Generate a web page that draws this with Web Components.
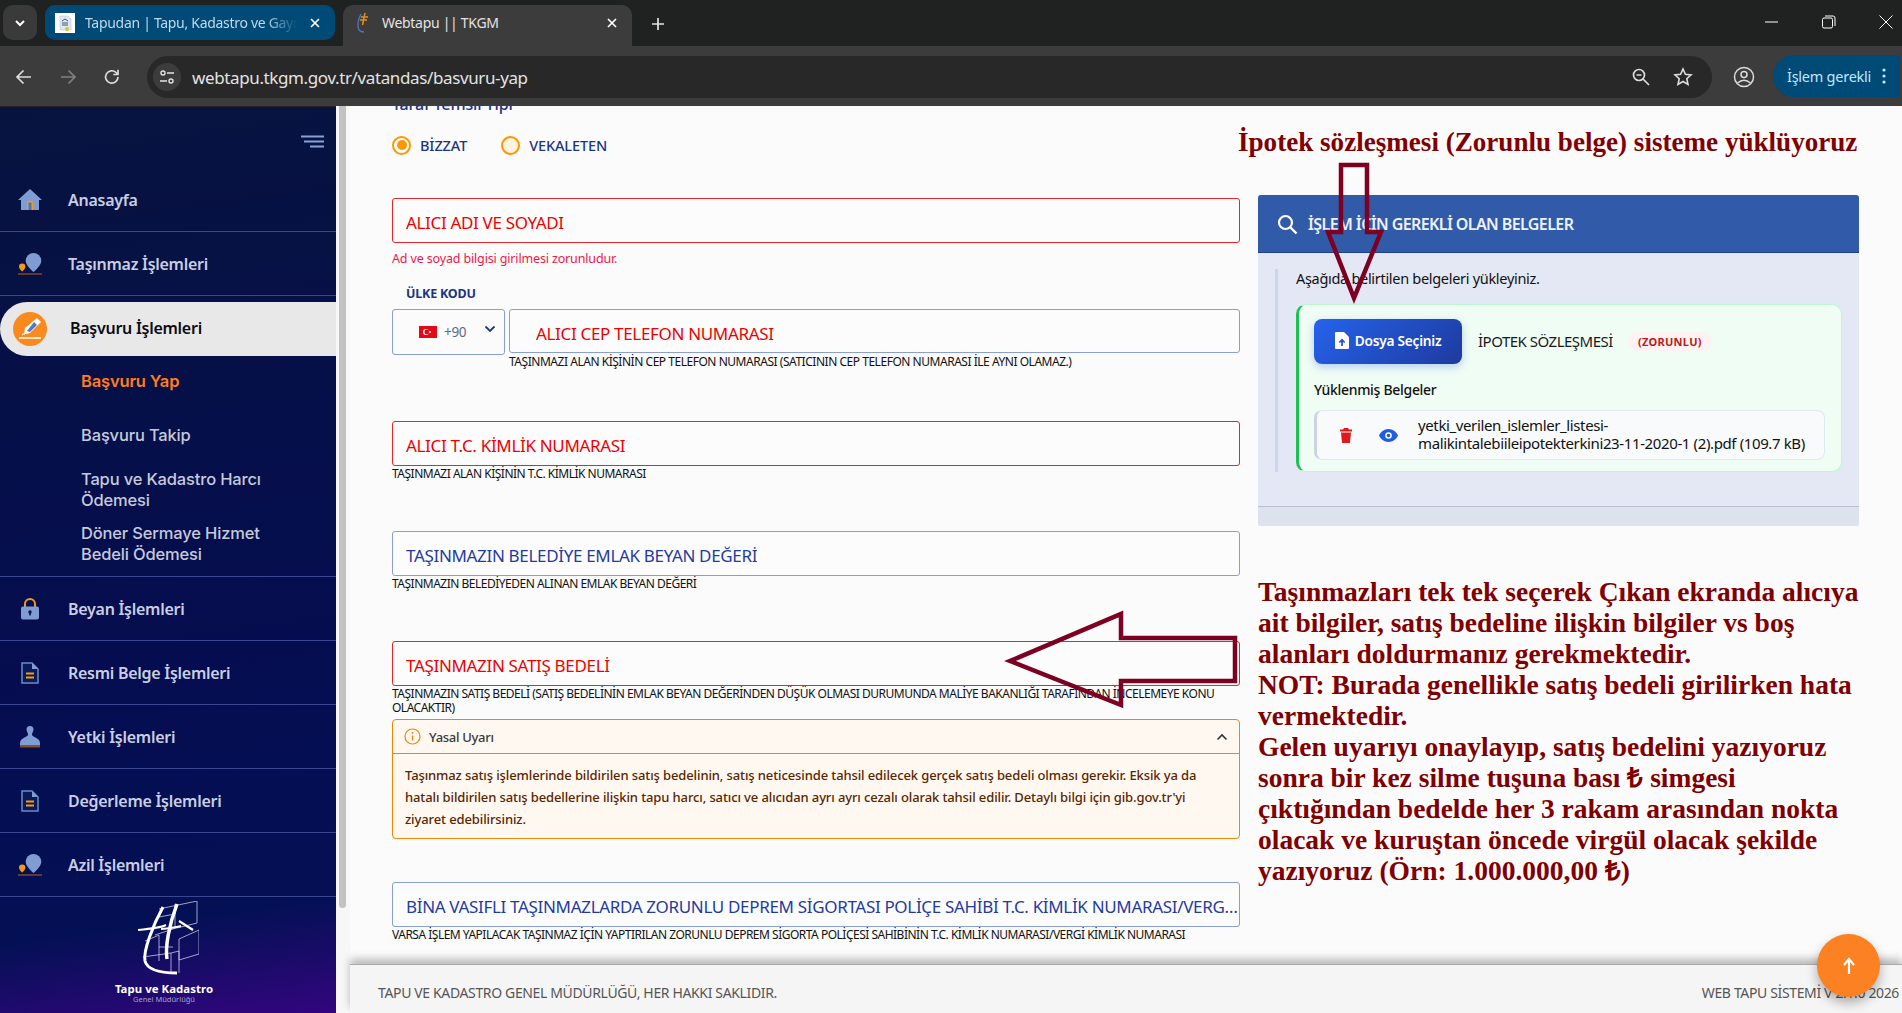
<!DOCTYPE html>
<html lang="tr"><head><meta charset="utf-8"><title>Webtapu || TKGM</title>
<style>html,body{margin:0;height:100%;overflow:hidden;background:#fbfbfb}body{font-family:"Noto Sans","Liberation Sans",sans-serif}</style></head>
<body>
<x-app>
  <x-browser-chrome slot="chrome"></x-browser-chrome>
  <x-sidebar slot="side">
    <x-nav-item icon="home">Anasayfa</x-nav-item>
    <x-nav-item icon="pin">Taşınmaz İşlemleri</x-nav-item>
    <x-nav-group>
      <x-nav-item icon="pen" active>Başvuru İşlemleri</x-nav-item>
      <x-sub-item current>Başvuru Yap</x-sub-item>
      <x-sub-item>Başvuru Takip</x-sub-item>
      <x-sub-item end>Tapu ve Kadastro Harcı Ödemesi</x-sub-item>
      <x-sub-item end>Döner Sermaye Hizmet Bedeli Ödemesi</x-sub-item>
    </x-nav-group>
    <x-nav-item icon="lock">Beyan İşlemleri</x-nav-item>
    <x-nav-item icon="doc">Resmi Belge İşlemleri</x-nav-item>
    <x-nav-item icon="stamp">Yetki İşlemleri</x-nav-item>
    <x-nav-item icon="doc">Değerleme İşlemleri</x-nav-item>
    <x-nav-item icon="pin">Azil İşlemleri</x-nav-item>
  </x-sidebar>
  <x-scrollbar slot="bar"></x-scrollbar>
  <x-page slot="main">
    <x-form-col slot="form">
      <x-radios></x-radios>
      <x-field tone="red" style="margin-top:43px" error="Ad ve soyad bilgisi girilmesi zorunludur.">ALICI ADI VE SOYADI</x-field>
      <x-phone-field style="margin-top:20px" hint="TAŞINMAZI ALAN KİŞİNİN CEP TELEFON NUMARASI (SATICININ CEP TELEFON NUMARASI İLE AYNI OLAMAZ.)">ALICI CEP TELEFON NUMARASI</x-phone-field>
      <x-field tone="red" style="margin-top:52px" hint="TAŞINMAZI ALAN KİŞİNİN T.C. KİMLİK NUMARASI">ALICI T.C. KİMLİK NUMARASI</x-field>
      <x-field tone="blue" style="margin-top:50px" hint="TAŞINMAZIN BELEDİYEDEN ALINAN EMLAK BEYAN DEĞERİ">TAŞINMAZIN BELEDİYE EMLAK BEYAN DEĞERİ</x-field>
      <x-field tone="red" style="margin-top:50px" hint="TAŞINMAZIN SATIŞ BEDELİ (SATIŞ BEDELİNİN EMLAK BEYAN DEĞERİNDEN DÜŞÜK OLMASI DURUMUNDA MALİYE BAKANLIĞI TARAFINDAN İNCELEMEYE KONU OLACAKTIR)">TAŞINMAZIN SATIŞ BEDELİ</x-field>
      <x-alert-box style="margin-top:4px" title="Yasal Uyarı">Taşınmaz satış işlemlerinde bildirilen satış bedelinin, satış neticesinde tahsil edilecek gerçek satış bedeli olması gerekir. Eksik ya da hatalı bildirilen satış bedellerine ilişkin tapu harcı, satıcı ve alıcıdan ayrı ayrı cezalı olarak tahsil edilir. Detaylı bilgi için gib.gov.tr'yi ziyaret edebilirsiniz.</x-alert-box>
      <x-field tone="blue" style="margin-top:43px" hint="VARSA İŞLEM YAPILACAK TAŞINMAZ İÇİN YAPTIRILAN ZORUNLU DEPREM SİGORTA POLİÇESİ SAHİBİNİN T.C. KİMLİK NUMARASI/VERGİ KİMLİK NUMARASI">BİNA VASIFLI TAŞINMAZLARDA ZORUNLU DEPREM SİGORTASI POLİÇE SAHİBİ T.C. KİMLİK NUMARASI/VERGİ KİMLİK NUMARASI</x-field>
    </x-form-col>
    <x-side-col slot="aside">
      <x-note head>İpotek sözleşmesi (Zorunlu belge) sisteme yüklüyoruz</x-note>
      <x-docs-panel></x-docs-panel>
      <x-note>Taşınmazları tek tek seçerek Çıkan ekranda alıcıya ait bilgiler, satış bedeline ilişkin bilgiler vs boş alanları doldurmanız gerekmektedir.<br>NOT: Burada genellikle satış bedeli girilirken hata vermektedir.<br>Gelen uyarıyı onaylayıp, satış bedelini yazıyoruz sonra bir kez silme tuşuna bası ₺ simgesi çıktığından bedelde her 3 rakam arasından nokta olacak ve kuruştan öncede virgül olacak şekilde yazıyoruz (Örn: 1.000.000,00 ₺)</x-note>
    </x-side-col>
  </x-page>
  <x-page-footer slot="main"></x-page-footer>
  <x-arrows slot="over"></x-arrows>
  <x-fab slot="over"></x-fab>
</x-app>
<script>
const UI='"Noto Sans","Liberation Sans",sans-serif';
function def(name,html,init){
  const t=document.createElement('template');t.innerHTML=html;
  customElements.define(name,class extends HTMLElement{
    constructor(){super();this.attachShadow({mode:'open'}).appendChild(t.content.cloneNode(true));}
    connectedCallback(){if(init)init.call(this,this.shadowRoot);}
  });
}
def('x-app',`<style>:host{display:flex;flex-direction:column;height:100vh;position:relative;overflow:hidden}
.r{flex:1;display:flex;min-height:0}.m{flex:1;display:flex;flex-direction:column;min-width:0}</style>
<slot name="chrome"></slot><div class="r"><slot name="side"></slot><slot name="bar"></slot><div class="m"><slot name="main"></slot></div></div><slot name="over"></slot>`);

def('x-browser-chrome',`<style>
:host{display:block;height:106px;background:#3c3c3c;font-family:${UI};position:relative}
.strip{height:46px;background:#202221;display:flex;align-items:flex-end;position:relative}
.drop{width:34px;height:35px;border-radius:10px;background:#3a3a3a;margin:0 8px 6px 3px;display:flex;align-items:center;justify-content:center}
.tab{height:35px;width:290px;background:#004a77;border-radius:10px;margin-bottom:6px;display:flex;align-items:center;color:#c2d8e8;font-size:14px;letter-spacing:-.3px;box-sizing:border-box;padding:0 12px 0 10px}
.tab.on{height:41px;width:289px;margin:0 0 0 8px;background:#3c3c3c;border-radius:10px 10px 0 0;color:#e3e3e3;padding-bottom:6px}
.tab span{flex:1;white-space:nowrap;overflow:hidden;margin:0 10px 0 10px;-webkit-mask-image:linear-gradient(90deg,#000 85%,transparent)}
.x{color:#fff;width:16px;text-align:center;flex:none;display:flex}
.plus{margin:0 0 14px 18px;display:flex}
.win{position:absolute;right:9px;top:15px;display:flex;gap:43px;align-items:center}
.tool{height:60px;box-sizing:border-box;padding-top:2px;display:flex;align-items:center;position:relative}
.nav{display:flex;width:147px;padding-left:14px;box-sizing:border-box;gap:24px}
.addr{width:1565px;height:42px;background:#282828;border-radius:21px;display:flex;align-items:center;color:#e3e3e3;font-size:17px;box-sizing:border-box;padding-left:6px;flex:none}
.info{width:28px;height:28px;border-radius:50%;background:#3c3c3c;margin-right:11px;display:flex;align-items:center;justify-content:center}
.url{flex:1;letter-spacing:-.38px}.ai{display:flex;gap:22px;margin-right:19px}
.prof{margin-left:21px;display:flex}.pill{margin:-2px 0 0 18px;width:127px;height:42px;background:#004a77;border-radius:21px 0 0 21px;color:#c2e7ff;font-size:14.5px;display:flex;align-items:center;box-sizing:border-box;padding-left:14px;letter-spacing:-.25px;flex:none;white-space:nowrap}
.dots{margin-left:11px;display:flex}
</style>
<div class="strip">
 <div class="drop"><svg width="14" height="14" viewBox="0 0 14 14"><path d="M3 5l4 4 4-4" fill="none" stroke="#fff" stroke-width="2"/></svg></div>
 <div class="tab"><svg width="20" height="20" viewBox="0 0 20 20" style="flex:none"><rect width="20" height="20" fill="#fff"/><path d="M5 3h8l3 3v11H5z" fill="#dfe7f0" stroke="#b8c4d2" stroke-width=".6"/><path d="M7 8l3-2 3 2M7 10h6M7 12h6" stroke="#35587f" fill="none"/><circle cx="12" cy="16" r="2" fill="#e6c229"/></svg><span>Tapudan | Tapu, Kadastro ve Gayrimenkul</span><div class="x"><svg width="16" height="16" viewBox="0 0 16 16"><path d="M4 4l8 8M12 4l-8 8" stroke="#fff" stroke-width="1.7"/></svg></div></div>
 <div class="tab on"><svg width="16" height="22" viewBox="0 0 16 22" style="flex:none"><path d="M8 2C5 8 4 14 6 18q1.500 2 5 2" fill="none" stroke="#4a76b8" stroke-width="1.400"/><path d="M12 1L9.500 13M8 5h7M7 8h7" fill="none" stroke="#e98a1a" stroke-width="1.500"/></svg><span style="margin-left:13px;-webkit-mask-image:none">Webtapu || TKGM</span><div class="x"><svg width="16" height="16" viewBox="0 0 16 16"><path d="M4 4l8 8M12 4l-8 8" stroke="#fff" stroke-width="1.7"/></svg></div></div>
 <div class="plus"><svg width="16" height="16" viewBox="0 0 16 16"><path d="M8 2v12M2 8h12" stroke="#e3e3e3" stroke-width="1.7"/></svg></div>
 <div class="win">
  <svg width="14" height="12" viewBox="0 0 14 12"><path d="M0 6h13" stroke="#fff"/></svg>
  <svg width="14" height="14" viewBox="0 0 14 14"><rect x=".5" y="3" width="10" height="10" rx="1.500" fill="none" stroke="#fff"/><path d="M3 1h8q2 0 2 2v8" fill="none" stroke="#fff"/></svg>
  <svg width="14" height="14" viewBox="0 0 14 14"><path d="M.5.5l13 13M13.500.5l-13 13" stroke="#fff"/></svg>
 </div>
</div>
<div class="tool">
 <div class="nav">
  <svg width="20" height="20" viewBox="0 0 20 20"><path d="M17 10H3.500M9.500 3.500L3 10l6.500 6.500" fill="none" stroke="#dcdcdc" stroke-width="1.700"/></svg>
  <svg width="20" height="20" viewBox="0 0 20 20"><path d="M3 10h13.500M10.500 3.500L17 10l-6.500 6.500" fill="none" stroke="#808080" stroke-width="1.700"/></svg>
  <svg width="20" height="20" viewBox="0 0 20 20"><path d="M16 10a6.200 6.200 0 1 1-1.900-4.500L16 7.300M16 2.800v4.700h-4.700" fill="none" stroke="#dcdcdc" stroke-width="1.700"/></svg>
 </div>
 <div class="addr">
  <div class="info"><svg width="18" height="18" viewBox="0 0 18 18"><circle cx="5" cy="5" r="2" fill="none" stroke="#e3e3e3" stroke-width="1.400"/><path d="M9 5h7M2 13h7" stroke="#e3e3e3" stroke-width="1.400"/><circle cx="13" cy="13" r="2" fill="none" stroke="#e3e3e3" stroke-width="1.400"/></svg></div>
  <div class="url">webtapu.tkgm.gov.tr/vatandas/basvuru-yap</div>
  <div class="ai">
   <svg width="20" height="20" viewBox="0 0 20 20"><circle cx="8" cy="8" r="5.500" fill="none" stroke="#dcdcdc" stroke-width="1.700"/><path d="M5.500 8h5M12 12l6 6" stroke="#dcdcdc" stroke-width="1.700"/></svg>
   <svg width="20" height="20" viewBox="0 0 20 20"><path d="M10 2l2.400 5.300 5.600.6-4.200 3.800 1.200 5.700L10 14.500l-5 2.900 1.200-5.700L2 7.900l5.600-.6z" fill="none" stroke="#dcdcdc" stroke-width="1.600"/></svg>
  </div>
 </div>
 <div class="prof"><svg width="22" height="22" viewBox="0 0 22 22"><circle cx="11" cy="11" r="9.500" fill="none" stroke="#dcdcdc" stroke-width="1.500"/><circle cx="11" cy="8.500" r="3" fill="none" stroke="#dcdcdc" stroke-width="1.500"/><path d="M4.500 17q6.500-5.500 13 0" fill="none" stroke="#dcdcdc" stroke-width="1.500"/></svg></div>
 <div class="pill">İşlem gerekli<div class="dots"><svg width="4" height="16" viewBox="0 0 4 16"><circle cx="2" cy="2" r="1.600" fill="#c2e7ff"/><circle cx="2" cy="8" r="1.600" fill="#c2e7ff"/><circle cx="2" cy="14" r="1.600" fill="#c2e7ff"/></svg></div></div>
</div>`);

def('x-sidebar',`<style>
:host{display:flex;flex-direction:column;width:336px;flex:none;background:linear-gradient(172deg,#07133f 0%,#050d50 60%,#041055 88%,#33057f 100%);box-shadow:inset 0 1px 0 #222}
.top{height:62px;display:flex;justify-content:flex-end;align-items:flex-start;padding:29px 11px 0 0;box-sizing:border-box}
.logo{flex:1;display:flex;flex-direction:column;align-items:center;padding:4px 8px 0 0}
.t{color:#fff;font:700 11.400px ${UI};line-height:13px;margin-top:7px;letter-spacing:.05px}.s{color:#a8a4c8;font:400 7.500px ${UI};line-height:9px}
</style>
<div class="top"><svg width="24" height="13" viewBox="0 0 24 13"><path d="M0 1.500h23M3 6.500h20M9 11.500h14" stroke="#8aa0d4" stroke-width="2"/></svg></div>
<slot></slot>
<div class="logo"><svg width="62" height="74" viewBox="0 0 62 74" style="margin-left:8px"><g fill="none" stroke="#c8c6e8" stroke-width=".8"><path d="M22 8l38-8v22l-20 5M38 3v24M22 16l16-3M18 34l24-8M42 38l20-9v24l-20 6zM8 40q12-5 14-6v26M6 56l28-4v20M22 46h14M34 52l8-2v22"/></g><g fill="none" stroke="#fff"><path d="M26 6C16 24 6 50 8 60q3 12 32 12" stroke-width="3"/><path d="M40 3C32 24 28 46 30 58" stroke-width="3.500"/><path d="M1 29q22-2 28-5M24 28q12-1 20-3M42 20l14 9" stroke-width="2.200"/></g></svg>
<div class="t">Tapu ve Kadastro</div><div class="s">Genel Müdürlüğü</div></div>`);

const ICONS={
home:`<svg width="24" height="22" viewBox="0 0 24 22"><path d="M12 0L0 11h3v10h18V11h3z" fill="#7f9dd3"/><rect x="9" y="12" width="6" height="9" fill="#f59a13"/><rect x="10.500" y="13.500" width="3" height="7.500" fill="#3f77c9"/></svg>`,
pin:`<svg width="24" height="22" viewBox="0 0 24 22"><path d="M15.500 0a7.800 7.800 0 0 1 7.800 7.800C23.300 13 15.500 19 15.500 19S7.700 13 7.700 7.800A7.800 7.800 0 0 1 15.500 0z" fill="#7f9dd3"/><path d="M4.200 10.500a3.200 3.200 0 0 1 3.200 3.200c0 2-3.200 4.800-3.200 4.800S1 15.700 1 13.700a3.200 3.200 0 0 1 3.200-3.200z" fill="#f59a13"/><path d="M0 21h24" stroke="#b5651d" stroke-width="1"/></svg>`,
lock:`<svg width="18" height="22" viewBox="0 0 18 22"><path d="M4 10V6a5 5 0 0 1 10 0v4" fill="none" stroke="#f59a13" stroke-width="2"/><rect y="8.500" width="18" height="13" rx="2" fill="#7f9dd3"/><circle cx="9" cy="14" r="1.700" fill="#0a1550"/><rect x="8.200" y="14" width="1.600" height="3.500" fill="#0a1550"/></svg>`,
doc:`<svg width="18" height="22" viewBox="0 0 18 22"><path d="M1 1h10l6 6v14H1z" fill="#0a1a58" stroke="#6c8ac6" stroke-width="1.500"/><path d="M11 1v6h6z" fill="#7f9dd3"/><path d="M5 11.500h8M5 15.500h8" stroke="#f59a13" stroke-width="1.800"/></svg>`,
stamp:`<svg width="20" height="22" viewBox="0 0 20 22"><path d="M10 0a3.500 3.500 0 0 1 3.500 3.500c0 2-1.500 3-1.500 5 0 3 8 3 8 8.500v2H0v-2c0-5.500 8-5.500 8-8.500 0-2-1.500-3-1.500-5A3.500 3.500 0 0 1 10 0z" fill="#7f9dd3"/><rect y="19" width="20" height="2.500" fill="#8a5220"/></svg>`,
pen:`<svg width="34" height="34" viewBox="0 0 34 34"><circle cx="17" cy="17" r="17" fill="#fb8a1e"/><path d="M24 6l4 4-11 11-6 1.500L12 16z" fill="#fff"/><path d="M21 10l3 3-7 7-3-1z" fill="#4d7ac2"/><path d="M6 26h22" stroke="#fff" stroke-width="1.500"/><path d="M9 23q2-2 3-1" stroke="#fff" fill="none"/></svg>`};
def('x-nav-item',`<style>
:host{display:block;height:64px;box-sizing:border-box;border-bottom:1px solid #3a4690}
.i{height:63px;display:flex;align-items:center;color:#c9cee2;font:600 16px ${UI};letter-spacing:-.27px}
.ic{width:68px;flex:none;display:flex;justify-content:center;padding-right:8px;box-sizing:border-box}
:host([active]){height:auto;border:0;padding-top:6px;margin-bottom:-3px}
:host([active]) .i{height:54px;box-sizing:border-box;padding-bottom:2px;background:#e8e8e8;border-radius:27px 0 0 27px;color:#0b0b12;}
:host([active]) .ic{width:70px;padding-right:10px;padding-top:2px}
</style><div class="i"><div class="ic"></div><slot></slot></div>`,function(s){s.querySelector('.ic').innerHTML=ICONS[this.getAttribute('icon')]||'';});
def('x-nav-group',`<style>:host{display:flex;flex-direction:column;gap:2px;border-bottom:1px solid #3a4690;padding-bottom:11px}</style><slot></slot>`);
def('x-sub-item',`<style>:host{display:flex;height:52px;align-items:center;padding:0 60px 0 81px;color:#c6c9da;font:500 16.500px/21px Inter,${UI};letter-spacing:-.16px}
:host([current]){color:#ff7d1a;font-weight:600}:host([end]){align-items:flex-end}:host([end]:nth-of-type(3)){height:48px}</style><slot></slot>`);
def('x-scrollbar',`<style>:host{display:block;width:14px;flex:none;background:#f7f7f7;box-sizing:border-box;padding:0 4px 5px 3px}
.t{height:802px;background:#c2c2c2;border-radius:0 0 4px 4px}</style><div class="t"></div>`);
def('x-page',`<style>:host{display:grid;flex:1;min-height:0;overflow:hidden;grid-template-columns:848px 601px;column-gap:18px;padding-left:42px;font-family:${UI};background:#fbfbfb}</style><slot name="form"></slot><slot name="aside"></slot>`);
def('x-form-col',`<style>:host{display:block}</style><slot></slot>`);
def('x-side-col',`<style>:host{display:block}</style><slot></slot>`);
def('x-radios',`<style>
:host{display:block;margin-top:-12px;color:#1c3484;font:500 14.500px ${UI};letter-spacing:-.12px}
.l{height:20px;line-height:20px;font-size:16px;padding-left:0;font-weight:500}
.r{display:flex;align-items:center;height:20px;margin-top:21px;gap:9px}
.c{width:19px;height:19px;border-radius:50%;border:2.500px solid #ff9800;box-sizing:border-box;background:#fff3e0;display:flex;align-items:center;justify-content:center;flex:none}
.c.on{background:#fff}.c.on i{width:10px;height:10px;background:#ff9800;border-radius:50%}
.g{width:16px}
</style><div class="l">Taraf Temsil Tipi</div><div class="r"><div class="c on"><i></i></div>BİZZAT<div class="g"></div><div class="c"></div>VEKALETEN</div>`);
const FIELD=`.b{height:45px;box-sizing:border-box;border:1px solid #8a9ed6;border-radius:3px;background:#fcfcfc;display:flex;align-items:center;padding:4px 0 0 13px;font-size:17px;letter-spacing:-.33px;color:#1f3ba0;overflow:hidden}
.b span{white-space:nowrap;overflow:hidden;text-overflow:ellipsis}
:host([tone=red]) .b{border-color:#e8262a;color:#f00000}
.h{font-size:12px;line-height:14px;letter-spacing:-.5px;color:#111;margin-top:1px}
.e{font-size:12.500px;line-height:14px;color:#f0174a;margin-top:9px;letter-spacing:-.15px}`;
def('x-field',`<style>:host{display:block;font-family:${UI}}${FIELD}</style><div class="b"><span><slot></slot></span></div><div class="m"></div>`,function(s){
 const m=s.querySelector('.m');const e=this.getAttribute('error'),h=this.getAttribute('hint');
 if(e){m.className='e';m.textContent=e}else if(h){m.className='h';m.textContent=h}});
def('x-phone-field',`<style>:host{display:block;font-family:${UI}}${FIELD}
.k{font-size:12.500px;font-weight:700;color:#1c3484;padding-left:14px;line-height:16px;letter-spacing:-.2px;margin-bottom:7px}
.g{display:grid;grid-template-columns:113px 1fr;gap:4px;align-items:start}
.s{height:46px;box-sizing:border-box;border:1px solid #8a9ed6;border-radius:3px;display:flex;align-items:center;padding-left:26px;color:#5a6a88;font-size:13.500px;gap:7px;letter-spacing:-.3px}
.s svg.ch{margin-left:11px;margin-top:-6px}
.b{height:44px;padding-left:26px;color:#f00000;border-color:#8a9ed6}
.h{margin-top:2px;letter-spacing:-.47px}
</style><div class="k">ÜLKE KODU</div><div class="g"><div class="s"><svg width="18" height="12" viewBox="0 0 18 12"><rect width="18" height="12" fill="#e30a17"/><circle cx="7" cy="6" r="3" fill="#fff"/><circle cx="7.800" cy="6" r="2.400" fill="#e30a17"/><circle cx="11" cy="6" r="1" fill="#fff"/></svg>+90<svg class="ch" width="12" height="8" viewBox="0 0 12 8"><path d="M1.500 1.500L6 6l4.500-4.500" fill="none" stroke="#1f3a7a" stroke-width="1.800"/></svg></div>
<div><div class="b"><span><slot></slot></span></div><div class="h"></div></div></div>`,function(s){s.querySelector('.h').textContent=this.getAttribute('hint')});
def('x-alert-box',`<style>:host{display:block;box-sizing:border-box;height:120px;border:1px solid #e8890c;border-radius:4px;background:#fff8f1;font-family:${UI}}
.t{height:34px;box-sizing:border-box;border-bottom:1px solid #e8890c;display:flex;align-items:center;padding:0 11px 0 11px;font-size:13px;color:#3a3a3a;gap:8px;letter-spacing:-.3px;font-weight:500}
.t span{flex:1}.x{padding:10px 22px 0 12px;font-size:13px;line-height:22px;color:#5a2500;letter-spacing:-.115px;font-weight:500}
</style><div class="t"><svg width="17" height="17" viewBox="0 0 17 17"><circle cx="8.500" cy="8.500" r="7.500" fill="none" stroke="#e8890c" stroke-width="1.200"/><path d="M8.500 7.500v5" stroke="#e8890c" stroke-width="1.400"/><circle cx="8.500" cy="5" r="1" fill="#e8890c"/></svg><span></span><svg width="12" height="8" viewBox="0 0 12 8"><path d="M1.500 6.500L6 2l4.500 4.500" fill="none" stroke="#333" stroke-width="1.600"/></svg></div><div class="x"><slot></slot></div>`,function(s){s.querySelector('.t span').textContent=this.getAttribute('title')});
def('x-note',`<style>:host{display:block;font:700 27.500px/31px "Liberation Serif",serif;color:#800000;margin:50px -6px 0 0}
:host([head]){font-size:27.100px;white-space:nowrap;margin:21px 0 0 -20px;line-height:31px}</style><slot></slot>`);
def('x-docs-panel',`<style>
:host{display:block;margin-top:37px;height:331px;background:#e3e8f4;border-radius:3px;overflow:hidden;font-family:${UI};position:relative}
.h{height:58px;box-sizing:border-box;background:#315aa8;border-bottom:1px solid #1c3f92;display:flex;align-items:center;padding:1px 0 0 19px;color:#eef2fa;font-size:16px;font-weight:600;gap:10px;letter-spacing:-.6px}
.bd{margin:17px 17px 0;border-left:3px solid #cbd5ee;height:203px;box-sizing:border-box;padding-left:18px;}
.p{font-size:14.500px;line-height:18px;color:#111;letter-spacing:-.3px;margin:-1px 0 17px}
.card{height:168px;box-sizing:border-box;margin-right:0;border:1px solid #bbf7d0;border-left:3px solid #1cc24f;border-radius:10px;background:#f0fdf4;padding:14px 16px 0 15px}
.row{display:flex;align-items:center;gap:16px}
.btn{width:148px;height:45px;box-sizing:border-box;padding-bottom:2px;border-radius:8px;background:linear-gradient(135deg,#2563eb,#1e3a9f);box-shadow:0 3px 8px rgba(37,99,235,.3);color:#fff;font-size:13.700px;font-weight:600;letter-spacing:-.25px;display:flex;align-items:center;justify-content:center;gap:6px;flex:none}
.n{font-size:15px;color:#1a1a1a;letter-spacing:-.5px;padding-bottom:2px}.z{background:#fef2f2;color:#b91c1c;font-size:11px;font-weight:700;padding:2px 10px;border-radius:10px;letter-spacing:.3px;margin-left:-1px}
.y{font-size:14px;font-weight:500;color:#111;letter-spacing:-.3px;margin:16px 0 11px;line-height:19px}
.f{height:50px;box-sizing:border-box;background:#f8fafc;border:1px solid #e2e8f0;border-left:3px solid #cbd5e1;border-radius:8px;display:flex;align-items:center;padding-left:23px}
.f .tx{font-size:15px;line-height:18px;letter-spacing:-.38px;color:#111;margin-left:20px;padding-bottom:2px;white-space:nowrap}
.f svg+svg{margin-left:27px}
.ft{position:absolute;left:0;right:0;bottom:0;height:19px;background:#dde2ec;border-top:1px solid #b9bfd0}
</style>
<div class="h"><svg width="21" height="21" viewBox="0 0 21 21"><circle cx="8.500" cy="8.500" r="6.500" fill="none" stroke="#fff" stroke-width="2.200"/><path d="M13.500 13.500l6 6" stroke="#fff" stroke-width="2.400"/></svg>İŞLEM İÇİN GEREKLİ OLAN BELGELER</div>
<div class="bd"><div class="p">Aşağıda belirtilen belgeleri yükleyiniz.</div>
<div class="card"><div class="row"><div class="btn"><svg width="14" height="17" viewBox="0 0 14 17"><path d="M1 0h8l5 5v11a1 1 0 0 1-1 1H1a1 1 0 0 1-1-1V1a1 1 0 0 1 1-1z" fill="#fff"/><path d="M7 14V8M4.300 10.500L7 7.800l2.700 2.700" fill="none" stroke="#2353c8" stroke-width="1.700"/></svg>Dosya Seçiniz</div><div class="n">İPOTEK SÖZLEŞMESİ</div><div class="z">(ZORUNLU)</div></div>
<div class="y">Yüklenmiş Belgeler</div>
<div class="f"><svg width="12" height="15" viewBox="0 0 12 15"><path d="M4 0h4l1 1.500h3v2H0v-2h3zM1 4.500h10L10 15H2z" fill="#dc1c1c"/></svg><svg width="19" height="13" viewBox="0 0 19 13"><path d="M9.500 0C5 0 1.500 3 0 6.500 1.500 10 5 13 9.500 13S17.500 10 19 6.500C17.500 3 14 0 9.500 0z" fill="#1d5fe0"/><circle cx="9.500" cy="6.500" r="3.300" fill="#fff"/><circle cx="9.500" cy="6.500" r="1.800" fill="#1d5fe0"/></svg><div class="tx">yetki_verilen_islemler_listesi-<br>malikintalebiileipotekterkini23-11-2020-1 (2).pdf (109.7 kB)</div></div>
</div></div><div class="ft"></div>`);
def('x-page-footer',`<style>:host{display:flex;flex:none;height:48px;box-sizing:border-box;background:#f5f5f5;justify-content:space-between;align-items:center;padding:6px 3px 0 28px;font:400 14px ${UI};color:#555;letter-spacing:-.36px;white-space:nowrap;box-shadow:0 -1px 0 #aaa,0 -6px 8px rgba(0,0,0,.26);position:relative;overflow:visible}</style><span>TAPU VE KADASTRO GENEL MÜDÜRLÜĞÜ, HER HAKKI SAKLIDIR.</span><span>WEB TAPU SİSTEMİ V 2.1.0 2026</span>`);
def('x-arrows',`<style>:host{position:absolute;inset:0;pointer-events:none;display:block}svg{position:absolute;left:0;top:0}</style>
<svg width="1902" height="1013"><g fill="none" stroke="#7d0022" stroke-width="4.500" stroke-linejoin="miter">
<path d="M1341 232V165H1367V232H1381L1354 298L1328 232Z"/>
<path d="M1235 638H1121V614L1010 661L1121 705V681H1235Z"/></g></svg>`);
def('x-fab',`<style>:host{position:absolute;left:1817px;top:934px;width:63px;height:63px;border-radius:50%;background:#fb8122;box-shadow:0 6px 12px rgba(0,0,0,.3);display:flex;align-items:center;justify-content:center}</style><svg width="20" height="20" viewBox="0 0 20 20"><path d="M10 18V4M5 9l5-6 5 6" fill="none" stroke="#fff" stroke-width="2.200"/></svg>`);
</script>
</body></html>
